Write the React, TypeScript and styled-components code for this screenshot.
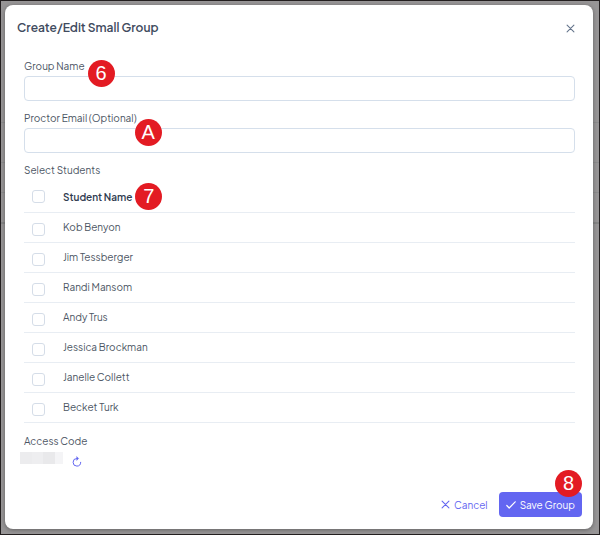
import React, { useState } from "react";
import styled, { createGlobalStyle } from "styled-components";

const GlobalStyle = createGlobalStyle`
  *, *::before, *::after { box-sizing: border-box; }
  body {
    margin: 0;
    background: #979596;
    color: #4b5563;
    font-family: "Plus Jakarta Sans", Inter, "Liberation Sans", sans-serif;
    font-size: 10px;
    line-height: 14px;
  }
  button, input { font: inherit; }
`;

const Screen = styled.div`
  position: relative;
  min-height: 100vh;
  padding: 4px 6px 5px 4px;
  border: 1px solid #231f20;
  background: #979596;
`;

const Backdrop = styled.div`
  position: absolute;
  inset: 0;
`;

const BackdropRow = styled.div<{ $height: number; $strong?: boolean }>`
  height: ${(p) => p.$height}px;
  border-bottom: ${(p) => (p.$strong ? "2px solid #858585" : "1px solid #8b8b8c")};
`;

const Dialog = styled.section`
  position: relative;
  display: flex;
  flex-direction: column;
  min-height: calc(100vh - 11px);
  border-radius: 8px;
  background: #ffffff;
  box-shadow: 0 1px 4px rgba(0, 0, 0, 0.35);
`;

const Header = styled.header`
  display: flex;
  align-items: center;
  justify-content: space-between;
  padding: 13px 15px 13px 12px;
`;

const Title = styled.h1`
  margin: 0;
  color: #3f4b5e;
  font-size: 12px;
  line-height: 20px;
  font-weight: 600;
`;

const IconButton = styled.button<{ $color: string }>`
  display: flex;
  align-items: center;
  justify-content: center;
  width: 16px;
  height: 16px;
  padding: 0;
  border: 0;
  background: none;
  color: ${(p) => p.$color};
  cursor: pointer;
`;

const Body = styled.div`
  flex: 1;
  padding: 8px 18px 0 19px;
`;

const Field = styled.div`
  display: flex;
  flex-direction: column;
  align-items: flex-start;
  gap: 3px;
  margin-bottom: 10px;
`;

const Caption = styled.span`
  position: relative;
  display: inline-block;
`;

const Label = styled.label``;

const TextInput = styled.input`
  width: 100%;
  height: 25px;
  padding: 0 8px;
  border: 1px solid #d5dfeb;
  border-radius: 4px;
  background: #ffffff;
  color: inherit;
  outline: none;

  &:focus { border-color: #6366f1; }
`;

const Badge = styled.span<{ $x: number; $y: number }>`
  position: absolute;
  z-index: 1;
  left: calc(100% + ${(p) => p.$x}px);
  top: ${(p) => p.$y}px;
  display: flex;
  align-items: center;
  justify-content: center;
  width: 27px;
  height: 27px;
  border-radius: 50%;
  background: #e31b23;
  color: #ffffff;
  font-family: "Liberation Sans", sans-serif;
  font-size: 20px;
  line-height: 27px;
  font-weight: 400;
  pointer-events: none;
`;

const Table = styled.table`
  width: 100%;
  margin-top: 5px;
  border-collapse: collapse;
  text-align: left;
`;

const TableCaption = styled.div``;

const Row = styled.tr`
  height: 30px;
  border-bottom: 1px solid #e8edf3;
`;

const CheckCell = styled.td<{ $top: number }>`
  width: 39px;
  padding: ${(p) => p.$top}px 0 0 8px;
  vertical-align: middle;
`;

const HeadCell = styled.th`
  padding: 0;
  color: #2f3b50;
  font-weight: 600;
`;

const NameCell = styled.td`
  padding: 0;
`;

const Checkbox = styled.input`
  display: block;
  appearance: none;
  width: 13px;
  height: 13px;
  margin: 0;
  border: 1px solid #d5dde8;
  border-radius: 3px;
  background: #ffffff;
  cursor: pointer;

  &:checked { border-color: #6366f1; background: #6366f1; }
`;

const AccessCode = styled.div`
  margin-top: 11px;
`;

const CodeLine = styled.div`
  display: flex;
  align-items: flex-end;
  gap: 6px;
  height: 22px;
  margin-left: -4px;
`;

const MaskedCode = styled.div`
  display: flex;
  align-self: flex-start;
  margin-top: 4px;
`;

const MaskBlock = styled.span<{ $width: number; $tone: string }>`
  width: ${(p) => p.$width}px;
  height: 12px;
  background: ${(p) => p.$tone};
`;

const Footer = styled.footer`
  display: flex;
  align-items: center;
  justify-content: flex-end;
  gap: 4px;
  padding: 0 11px 12px;
`;

const Button = styled.button<{ $primary?: boolean }>`
  display: flex;
  align-items: center;
  gap: 4px;
  height: 25px;
  padding: 0 7px;
  border: 0;
  border-radius: 4px;
  background: ${(p) => (p.$primary ? "#6366f1" : "transparent")};
  color: ${(p) => (p.$primary ? "#ffffff" : "#6366f1")};
  font-size: 10px;
  font-weight: 400;
  cursor: pointer;
`;

const SaveWrap = styled.div`
  position: relative;
  display: flex;
`;

const Icon = styled.svg`
  flex: none;
  fill: none;
  stroke: currentColor;
  stroke-linecap: round;
  stroke-linejoin: round;
`;

const CrossIcon = ({ size }: { size: number }) => (
  <Icon width={size} height={size} viewBox="0 0 10 10" strokeWidth="1.2" aria-hidden="true">
    <path d="M1.2 1.2 8.8 8.8M8.8 1.2 1.2 8.8" />
  </Icon>
);

const CheckIcon = () => (
  <Icon width="10" height="10" viewBox="0 0 10 10" strokeWidth="1.2" aria-hidden="true">
    <path d="M.8 5.5 3.2 8 9.2 1.8" />
  </Icon>
);

const RefreshIcon = () => (
  <Icon width="10" height="11" viewBox="0 0 10 11" strokeWidth="1" aria-hidden="true">
    <path d="M5.2 2.5H4.9A3.8 3.8 0 1 0 8.7 6.3" />
    <path d="M4.9 .8 6.6 2.5 4.9 4.2Z" fill="currentColor" strokeWidth="0.5" />
  </Icon>
);

const students = [
  "Kob Benyon",
  "Jim Tessberger",
  "Randi Mansom",
  "Andy Trus",
  "Jessica Brockman",
  "Janelle Collett",
  "Becket Turk",
];

const maskBlocks = [
  { width: 12, tone: "#ececee" },
  { width: 11, tone: "#eeeef0" },
  { width: 12, tone: "#e9e9eb" },
  { width: 8, tone: "#f4f4f6" },
];

export default function App() {
  const [selected, setSelected] = useState<string[]>([]);
  const allSelected = selected.length === students.length;

  const toggle = (name: string) =>
    setSelected((list) =>
      list.includes(name) ? list.filter((n) => n !== name) : [...list, name]
    );

  return (
    <>
      <GlobalStyle />
      <Screen>
        <Backdrop>
          <BackdropRow $height={122} />
          <BackdropRow $height={40} />
          <BackdropRow $height={30} />
          <BackdropRow $height={31} $strong />
        </Backdrop>
        <Dialog role="dialog" aria-labelledby="dialog-title">
          <Header>
            <Title id="dialog-title">Create/Edit Small Group</Title>
            <IconButton type="button" $color="#64748b" aria-label="Close">
              <CrossIcon size={9} />
            </IconButton>
          </Header>
          <Body>
            <Field>
              <Caption>
                <Label htmlFor="group-name">Group Name</Label>
                <Badge $x={3} $y={1}>6</Badge>
              </Caption>
              <TextInput id="group-name" type="text" />
            </Field>
            <Field>
              <Caption>
                <Label htmlFor="proctor-email">Proctor Email (Optional)</Label>
                <Badge $x={-2} $y={8}>A</Badge>
              </Caption>
              <TextInput id="proctor-email" type="email" />
            </Field>
            <TableCaption id="students-label">Select Students</TableCaption>
            <Table aria-labelledby="students-label">
              <thead>
                <Row>
                  <CheckCell $top={0}>
                    <Checkbox
                      type="checkbox"
                      aria-label="Select all students"
                      checked={allSelected}
                      onChange={() => setSelected(allSelected ? [] : students)}
                    />
                  </CheckCell>
                  <HeadCell scope="col">
                    <Caption>
                      Student Name
                      <Badge $x={3} $y={-7}>7</Badge>
                    </Caption>
                  </HeadCell>
                </Row>
              </thead>
              <tbody>
                {students.map((name, i) => (
                  <Row key={name}>
                    <CheckCell $top={4}>
                      <Checkbox
                        id={`student-${i}`}
                        type="checkbox"
                        checked={selected.includes(name)}
                        onChange={() => toggle(name)}
                      />
                    </CheckCell>
                    <NameCell>
                      <Label htmlFor={`student-${i}`}>{name}</Label>
                    </NameCell>
                  </Row>
                ))}
              </tbody>
            </Table>
            <AccessCode>
              Access Code
              <CodeLine>
                <MaskedCode>
                  {maskBlocks.map((block, i) => (
                    <MaskBlock key={i} $width={block.width} $tone={block.tone} />
                  ))}
                </MaskedCode>
                <IconButton type="button" $color="#6366f1" aria-label="Refresh access code">
                  <RefreshIcon />
                </IconButton>
              </CodeLine>
            </AccessCode>
          </Body>
          <Footer>
            <Button type="button">
              <CrossIcon size={9} />
              Cancel
            </Button>
            <SaveWrap>
              <Button type="button" $primary>
                <CheckIcon />
                Save Group
              </Button>
              <Badge $x={-27} $y={-22}>8</Badge>
            </SaveWrap>
          </Footer>
        </Dialog>
      </Screen>
    </>
  );
}
